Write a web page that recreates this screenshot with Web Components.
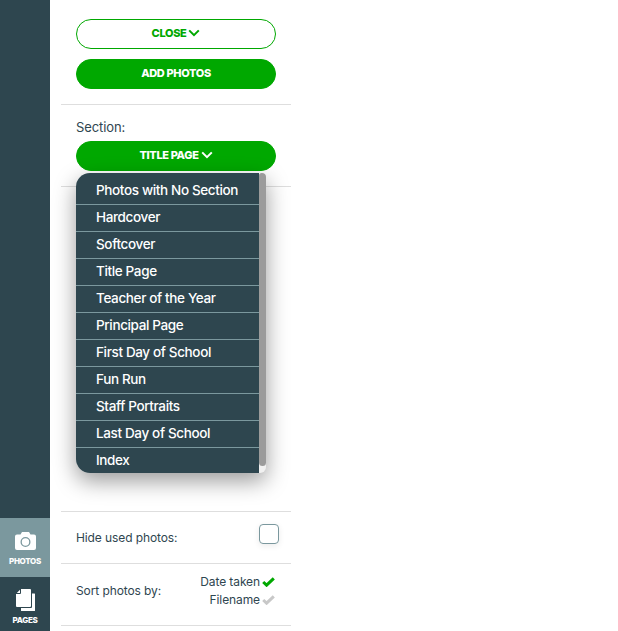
<!DOCTYPE html>
<html>
<head>
<meta charset="utf-8">
<title>Photos</title>
<style>
	html, body { margin: 0; height: 100%; background: #fff; overflow: hidden; }
	body { font-family: Inter, "Liberation Sans", sans-serif; color: #2f4650; }
</style>
</head>
<body>
<book-app></book-app>
<script>
const CHEVRON = `<svg width="12" height="8" viewBox="0 0 12 8"><path d="M1.2 1.4 6 6.2l4.800-4.800" fill="none" stroke="currentColor" stroke-width="2"/></svg>`;
const CHECK = `<svg width="13" height="10" viewBox="0 0 13 10"><path d="M1.2 5 4.600 8.200 11.800 1.400" fill="none" stroke="currentColor" stroke-width="3"/></svg>`;

class SideTab extends HTMLElement {
	constructor() {
		super();
		this.attachShadow({ mode: 'open' });
		this.shadowRoot.innerHTML = `
		<style>
			:host { display: flex; flex-direction: column; align-items: center; color: #fff; font: 800 8px Inter, sans-serif; letter-spacing: -0.3px; }
			:host([active]) { background: #7b989e; }
			::slotted(svg) { display: block; }
			span { display: block; }
		</style>
		<slot name="icon"></slot><span><slot></slot></span>`;
	}
}

class SideBar extends HTMLElement {
	constructor() {
		super();
		this.attachShadow({ mode: 'open' });
		this.shadowRoot.innerHTML = `
		<style>
			:host { display: flex; flex-direction: column; justify-content: flex-end; width: 50px; height: 631px; background: #2e464f; flex: none; }
			side-tab { height: 59px; padding-top: 14px; box-sizing: border-box; gap: 6px; }
			side-tab + side-tab { height: 54px; padding-top: 12px; gap: 4px; }
		</style>
		<side-tab active>
			<svg slot="icon" width="21" height="18" viewBox="0 0 21 18"><path fill="#fff" fill-rule="evenodd" d="M7 0h7l1.500 2.500H19a2 2 0 0 1 2 2V16a2 2 0 0 1-2 2H2a2 2 0 0 1-2-2V4.500a2 2 0 0 1 2-2h3.500zM10.500 5a5 5 0 1 0 0 10 5 5 0 0 0 0-10zm0 1.300a3.700 3.700 0 1 1 0 7.400 3.700 3.700 0 0 1 0-7.400z"/></svg>
			PHOTOS
		</side-tab>
		<side-tab>
			<svg slot="icon" width="19" height="22" viewBox="0 0 19 22"><path fill="#fff" d="M5 0h9a1 1 0 0 1 1 1v16a1 1 0 0 1-1 1H1a1 1 0 0 1-1-1V5h4a1 1 0 0 0 1-1z"/><path fill="#fff" d="M.8 4 4 .8V4zM16 4.500h2.500a.5.500 0 0 1 .5.500v16.500a.5.500 0 0 1-.5.500H5.500a.5.500 0 0 1-.5-.500V19h10a1 1 0 0 0 1-1z"/></svg>
			PAGES
		</side-tab>`;
	}
}

class PillButton extends HTMLElement {
	constructor() {
		super();
		this.attachShadow({ mode: 'open' });
		this.shadowRoot.innerHTML = `
		<style>
			:host { display: flex; align-items: center; justify-content: center; gap: 2px; width: 200px; height: 30px; box-sizing: border-box; padding-bottom: 2px; border-radius: 15px; background: #00a800; border: 1px solid #00a800; color: #fff; font: 800 11px Inter, sans-serif; letter-spacing: -0.35px; }
			:host([outline]) { background: #fff; color: #00a800; }
			svg { display: block; }
		</style>
		<slot></slot>`;
		if (this.hasAttribute('chevron')) {
			this.shadowRoot.innerHTML += CHEVRON;
		}
	}
}

class SectionMenu extends HTMLElement {
	constructor() {
		super();
		this.attachShadow({ mode: 'open' });
		const items = JSON.parse(this.getAttribute('items'));
		this.shadowRoot.innerHTML = `
		<style>
			:host { display: flex; position: absolute; left: 15px; top: 173px; width: 190px; height: 300px; box-sizing: border-box; background: #f1f1f1; border-radius: 14px 4px 6px 14px; box-shadow: 0 8px 22px rgba(0,0,0,.4); overflow: hidden; z-index: 2; }
			ul { list-style: none; margin: 0; padding: 0; width: 183px; background: #2e464f; }
			li { height: 27px; box-sizing: border-box; padding-left: 20px; color: #fff; font: 500 13.500px/25px Inter, sans-serif; border-top: 1px solid #7b989e; letter-spacing: -0.36px; }
			li:first-child { border-top: 0; height: 31px; line-height: 34px; }
			i { display: block; width: 7px; height: 293px; background: #9b9b9b; border-radius: 3px 3px 4px 4px; }
		</style>
		<ul>${items.map((item) => `<li>${item}</li>`).join('')}</ul><i></i>`;
	}
}

class OptionRow extends HTMLElement {
	constructor() {
		super();
		this.attachShadow({ mode: 'open' });
		this.shadowRoot.innerHTML = `
		<style>
			:host { display: flex; align-items: center; justify-content: space-between; box-sizing: border-box; padding: 0 12px 0 15px; border-top: 1px solid #dedede; font: 400 12px Inter, sans-serif; letter-spacing: -0.1px; color: #2f4650; }
		</style>
		<slot></slot>`;
	}
}

class SortChoice extends HTMLElement {
	constructor() {
		super();
		this.attachShadow({ mode: 'open' });
		this.shadowRoot.innerHTML = `
		<style>
			:host { display: flex; align-items: center; justify-content: flex-end; gap: 2px; height: 18px; color: #00a800; }
			:host([off]) { color: #c8c8c8; }
			span { color: #2f4650; }
			svg { display: block; }
		</style>
		<span><slot></slot></span>${CHECK}`;
	}
}

class PhotoPanel extends HTMLElement {
	constructor() {
		super();
		this.attachShadow({ mode: 'open' });
		const sections = ['Photos with No Section', 'Hardcover', 'Softcover', 'Title Page', 'Teacher of the Year', 'Principal Page', 'First Day of School', 'Fun Run', 'Staff Portraits', 'Last Day of School', 'Index'];
		this.shadowRoot.innerHTML = `
		<style>
			:host { display: flex; flex-direction: column; position: relative; width: 230px; height: 631px; margin-left: 11px; flex: none; }
			.top { display: flex; flex-direction: column; gap: 10px; padding: 19px 0 15px 15px; border-bottom: 1px solid #dedede; }
			.section { padding: 14px 0 15px 15px; border-bottom: 1px solid #dedede; }
			label { display: block; font: 400 13px/16px Inter, sans-serif; letter-spacing: -0.1px; margin-bottom: 6px; }
			.fill { flex: 1; }
			.hide { height: 52px; }
			.sort { height: 62px; padding-bottom: 8px; }
			.box { width: 18px; height: 18px; margin-bottom: 8px; border: 1px solid #7b989e; border-radius: 4px; box-shadow: 0 2px 6px rgba(0,0,0,.08); }
			.choices { padding-right: 4px; }
			.last { border-top: 1px solid #dedede; height: 5px; }
		</style>
		<div class="top">
			<pill-button outline chevron>CLOSE</pill-button>
			<pill-button>ADD PHOTOS</pill-button>
		</div>
		<div class="section">
			<label>Section:</label>
			<pill-button chevron>TITLE PAGE</pill-button>
		</div>
		<div class="fill"></div>
		<option-row class="hide"><span>Hide used photos:</span><div class="box"></div></option-row>
		<option-row class="sort"><span>Sort photos by:</span>
			<div class="choices"><sort-choice>Date taken</sort-choice><sort-choice off>Filename</sort-choice></div>
		</option-row>
		<div class="last"></div>
		<section-menu items='${JSON.stringify(sections)}'></section-menu>`;
	}
}

class BookApp extends HTMLElement {
	constructor() {
		super();
		this.attachShadow({ mode: 'open' });
		this.shadowRoot.innerHTML = `
		<style>:host { display: flex; width: 618px; height: 631px; overflow: hidden; }</style>
		<side-bar></side-bar><photo-panel></photo-panel>`;
	}
}

customElements.define('side-tab', SideTab);
customElements.define('side-bar', SideBar);
customElements.define('pill-button', PillButton);
customElements.define('section-menu', SectionMenu);
customElements.define('option-row', OptionRow);
customElements.define('sort-choice', SortChoice);
customElements.define('photo-panel', PhotoPanel);
customElements.define('book-app', BookApp);
</script>
</body>
</html>
